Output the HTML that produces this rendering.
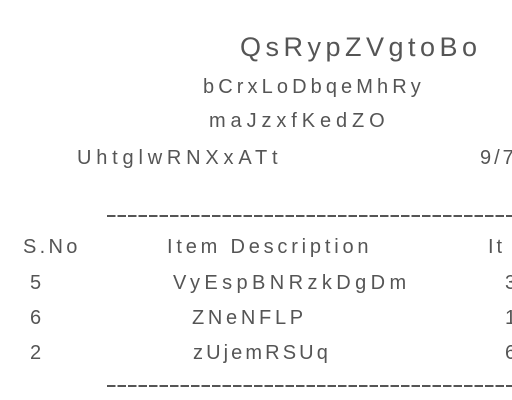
<!DOCTYPE html>
<html><head><style>
html,body{margin:0;padding:0;background:#fff;width:512px;height:400px;overflow:hidden;position:relative}
div{position:absolute;white-space:nowrap;font-family:"Liberation Sans",sans-serif;color:#555;font-weight:normal;line-height:1}
.d{height:2px;background:repeating-linear-gradient(90deg,#555 0 8.5px,transparent 8.5px 10.5px)}
</style></head><body>
<div style="left:240px;top:34px;font-size:27px;letter-spacing:4.5px">QsRypZVgtoBo</div>
<div style="left:203px;top:77px;font-size:20px;letter-spacing:4.1px">bCrxLoDbqeMhRy</div>
<div style="left:209px;top:111px;font-size:20px;letter-spacing:4.9px">maJzxfKedZO</div>
<div style="left:77px;top:148px;font-size:20px;letter-spacing:4.8px">UhtglwRNXxATt</div>
<div style="left:480px;top:148px;font-size:20px;letter-spacing:3px">9/7</div>
<div class="d" style="left:107px;top:215px;width:405px"></div>
<div style="left:23px;top:237px;font-size:20px;letter-spacing:3.3px">S.No</div>
<div style="left:167px;top:237px;font-size:20px;letter-spacing:3.8px">Item Description</div>
<div style="left:488px;top:237px;font-size:20px;letter-spacing:3px">It</div>
<div style="left:30px;top:273px;font-size:20px">5</div>
<div style="left:173px;top:273px;font-size:20px;letter-spacing:4.4px">VyEspBNRzkDgDm</div>
<div style="left:505px;top:273px;font-size:20px">3</div>
<div style="left:30px;top:308px;font-size:20px">6</div>
<div style="left:192px;top:308px;font-size:20px;letter-spacing:3.7px">ZNeNFLP</div>
<div style="left:505px;top:308px;font-size:20px">1</div>
<div style="left:30px;top:343px;font-size:20px">2</div>
<div style="left:193px;top:343px;font-size:20px;letter-spacing:3.1px">zUjemRSUq</div>
<div style="left:505px;top:343px;font-size:20px">6</div>
<div class="d" style="left:107px;top:385px;width:405px"></div>
</body></html>
